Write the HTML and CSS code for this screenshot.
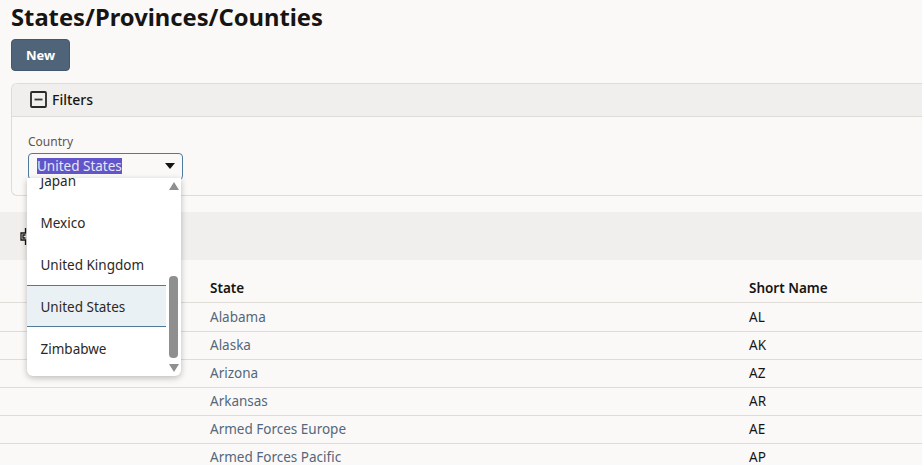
FILE: index.html
```html
<!DOCTYPE html>
<html lang="en">
<head>
  <meta charset="UTF-8" />
  <title>States/Provinces/Counties</title>
  <link rel="stylesheet" href="styles.css">
</head>
<body>
  <h1>States/Provinces/Counties</h1>
  <button class="new-btn">New</button>

  <section class="filters">
    <div class="filters-head">
      <svg class="toggle" width="17" height="17" viewBox="0 0 17 17"><rect x="1" y="1" width="15" height="15" rx="1" fill="none" stroke="#2b2825" stroke-width="1.8"/><path d="M4.500 8.500h8" stroke="#3a3734" stroke-width="1.800"/></svg>
      <span>Filters</span>
    </div>
    <div class="filters-body">
      <label class="field-label">Country</label>
      <div class="select-box">
        <span class="selected-text">United States</span>
        <span class="caret"></span>
      </div>
      <div class="dropdown">
        <ul class="options">
          <li class="option">Japan</li>
          <li class="option">Mexico</li>
          <li class="option">United Kingdom</li>
          <li class="option current">United States</li>
          <li class="option">Zimbabwe</li>
        </ul>
        <div class="scrollbar">
          <span class="arrow up"></span>
          <span class="thumb"></span>
          <span class="arrow down"></span>
        </div>
      </div>
    </div>
  </section>

  <div class="toolbar">
    <svg width="16" height="19" viewBox="0 0 16 19"><path d="M5.500 1v5H1v7h4.500v5M5.500 8H3v3h2.500" fill="none" stroke="#161513" stroke-width="1.300"/></svg>
  </div>

  <table>
    <thead>
      <tr><th class="col-blank"></th><th class="col-state">State</th><th>Short Name</th></tr>
    </thead>
    <tbody>
      <tr><td></td><td><a href="#">Alabama</a></td><td>AL</td></tr>
      <tr><td></td><td><a href="#">Alaska</a></td><td>AK</td></tr>
      <tr><td></td><td><a href="#">Arizona</a></td><td>AZ</td></tr>
      <tr><td></td><td><a href="#">Arkansas</a></td><td>AR</td></tr>
      <tr><td></td><td><a href="#">Armed Forces Europe</a></td><td>AE</td></tr>
      <tr><td></td><td><a href="#">Armed Forces Pacific</a></td><td>AP</td></tr>
    </tbody>
  </table>
</body>
</html>
```
FILE: styles.css
```css
* { box-sizing: border-box; }
html, body { height: 465px; overflow: hidden; }
body {
  margin: 0;
  background-color: #fbf9f8;
  color: #161513;
  font-family: "Noto Sans", sans-serif;
  font-size: 13.500px;
}
h1 {
  margin: 0 0 7px 11px;
  padding-top: 2px;
  font-size: 23.750px;
  line-height: 30px;
  font-weight: 700;
}
.new-btn {
  display: block;
  width: 59px;
  height: 32px;
  margin-left: 11px;
  padding: 0;
  border: 1px solid #44586c;
  border-radius: 4px;
  background-color: #4f6479;
  color: #fff;
  font-family: inherit;
  font-size: 13px;
  font-weight: 700;
}
.filters {
  margin: 12px 0 16px 11px;
  height: 113px;
  border: 1px solid #dfdcd8;
  border-right: none;
  border-radius: 6px 0 0 6px;
}
.filters-head {
  display: flex;
  align-items: center;
  gap: 5px;
  height: 33px;
  padding: 0 0 2px 18px;
  background-color: #f1efed;
  border-bottom: 1px solid #dfdcd8;
  border-radius: 6px 0 0 0;
  font-size: 14px;
  font-weight: 500;
}
.filters-body {
  position: relative;
  padding: 17px 0 0 16px;
}
.field-label {
  display: block;
  color: #5b5652;
  font-size: 12px;
  line-height: 16px;
  margin-bottom: 3px;
}
.select-box {
  display: flex;
  align-items: center;
  justify-content: space-between;
  width: 155px;
  height: 27px;
  padding: 0 7px 2px 8px;
  border: 1.500px solid #4f7a9c;
  border-radius: 4px;
}
.selected-text {
  background-color: #6055c9;
  color: #e8e6f5;
  line-height: 16px;
}
.caret {
  border-left: 5.500px solid transparent;
  border-right: 5.500px solid transparent;
  border-top: 6px solid #161513;
}
.dropdown {
  position: absolute;
  left: 15px;
  top: 61px;
  width: 154px;
  height: 198px;
  overflow: hidden;
  background-color: #fff;
  border-radius: 0 0 6px 6px;
  box-shadow: 0 2px 6px rgba(0, 0, 0, 0.25);
  z-index: 5;
}
.options {
  list-style: none;
  margin: -19px 15px 0 0;
  padding: 0;
}
.option {
  display: flex;
  align-items: center;
  height: 42px;
  padding: 2px 0 0 13.500px;
  color: #2b2825;
}
.current {
  background-color: #eaf1f5;
  border-top: 1px solid #4f7a9c;
  border-bottom: 1px solid #4f7a9c;
}
.scrollbar {
  position: absolute;
  top: 0;
  right: 3px;
  bottom: 0;
  width: 9px;
}
.arrow {
  position: absolute;
  left: -0.500px;
  border-left: 5px solid transparent;
  border-right: 5px solid transparent;
}
.arrow.up { top: 4px; border-bottom: 8px solid #8f8f8f; }
.arrow.down { bottom: 4px; border-top: 8px solid #8f8f8f; }
.thumb {
  position: absolute;
  left: 0;
  top: 98px;
  width: 9px;
  height: 82px;
  border-radius: 4px;
  background-color: #8f8f8f;
}
.toolbar {
  display: flex;
  align-items: center;
  height: 48px;
  padding-left: 20px;
  background-color: #f1efed;
}
table {
  width: 100%;
  table-layout: fixed;
  border-collapse: collapse;
}
th {
  height: 42px;
  padding: 15px 0 0;
  text-align: left;
  font-weight: 600;
  border-bottom: 1px solid #dfdcd8;
}
.col-blank { width: 210px; }
.col-state { width: 539px; }
td {
  height: 28px;
  padding: 0;
  border-bottom: 1px solid #dfdcd8;
}
tbody tr:first-child td { height: 29px; }
a {
  color: #54677b;
  text-decoration: none;
}
```
